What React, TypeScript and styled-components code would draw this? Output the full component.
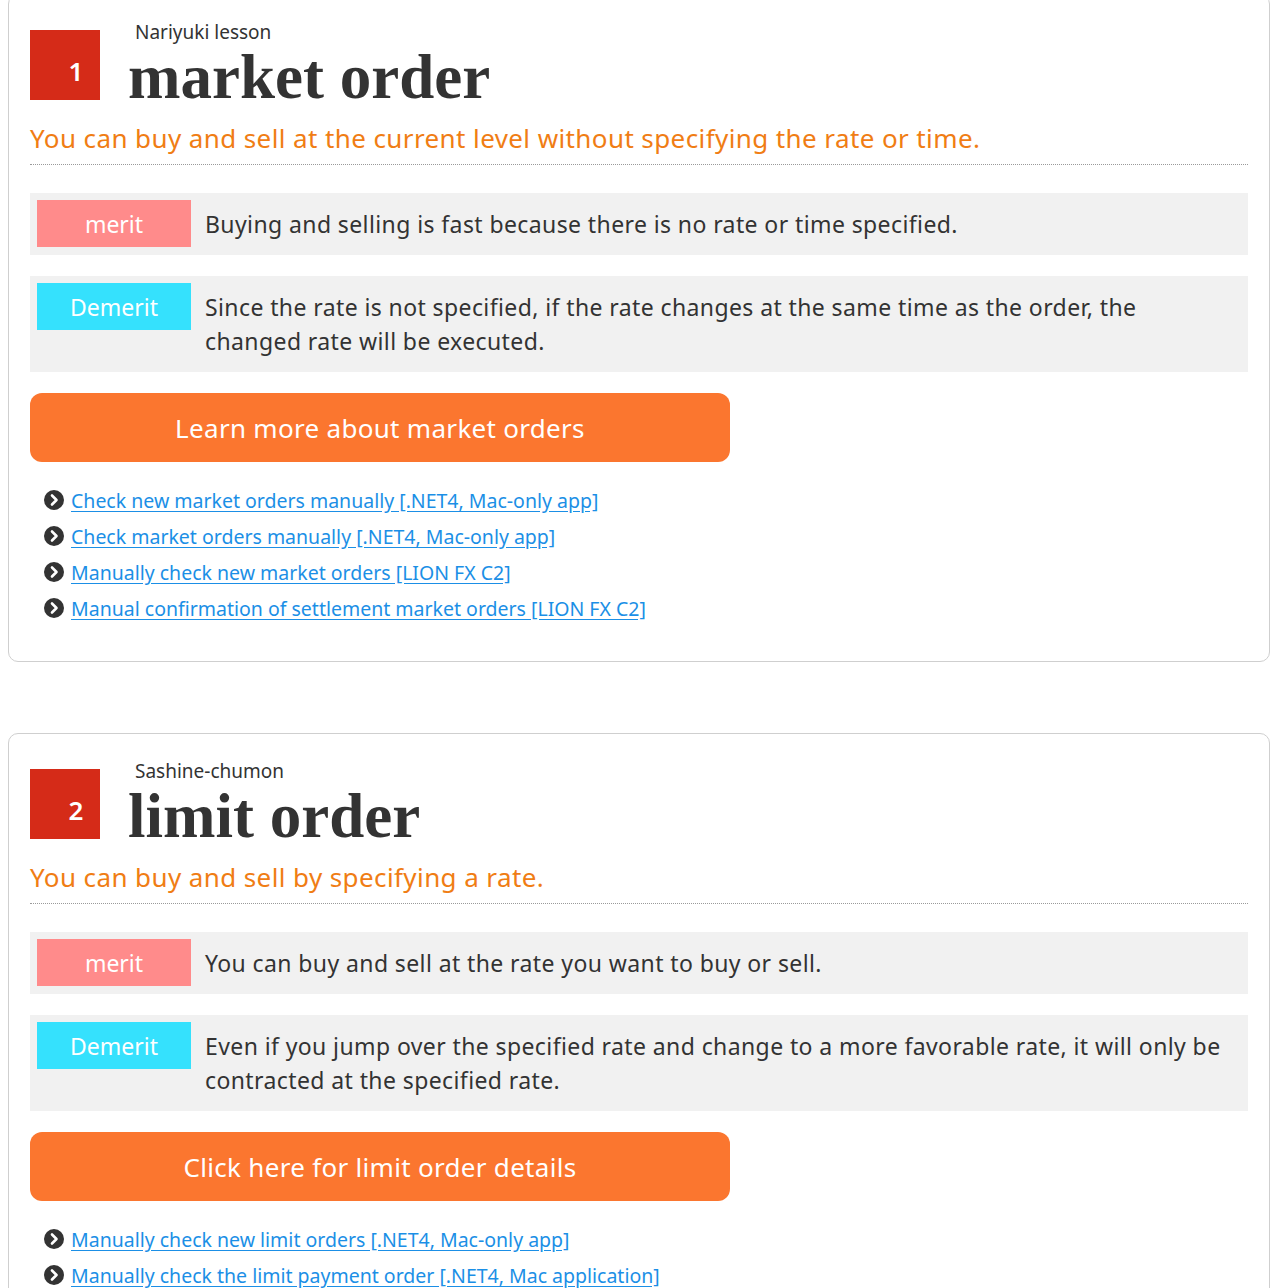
import React from 'react';
import styled, { createGlobalStyle } from 'styled-components';

const GlobalStyle = createGlobalStyle`
  html, body {
    margin: 0;
    padding: 0;
    background: #fff;
  }
  body {
    font-family: 'Noto Sans', 'Noto Sans CJK JP', sans-serif;
    color: #333;
  }
`;

const Page = styled.div`
  display: flex;
  flex-direction: column;
  gap: 71px;
  margin: -6px 1px 0 8px;
`;

const Card = styled.section`
  border: 1px solid #cfcfcf;
  border-radius: 10px;
  padding: 35px 21px 35px;
`;

const Heading = styled.div`
  display: flex;
  align-items: flex-start;
`;

const Badge = styled.div`
  display: flex;
  align-items: center;
  justify-content: center;
  width: 70px;
  height: 70px;
  padding: 12px 0 0 22px;
  box-sizing: border-box;
  background: #d52b18;
  color: #fff;
  font-size: 26px;
  font-weight: 600;
`;

const TitleBlock = styled.div`
  display: flex;
  flex-direction: column;
  margin-left: 28px;
  margin-top: -12px;
`;

const Subtitle = styled.div`
  padding-left: 7px;
  font-size: 19px;
  line-height: 28px;
`;

const Title = styled.h2`
  margin: 1px 0 0;
  font-family: 'Liberation Serif', 'DejaVu Serif', serif;
  font-size: 63px;
  font-weight: 700;
  line-height: 60px;
  color: #333;
`;

const Lead = styled.p`
  margin: 13px 0 0;
  padding-bottom: 8px;
  border-bottom: 1px dotted #9a9a9a;
  color: #f07d14;
  font-size: 26px;
  letter-spacing: 0.4px;
  line-height: 36px;
`;

const Points = styled.div`
  display: flex;
  flex-direction: column;
  gap: 21px;
  margin-top: 28px;
`;

const Point = styled.div`
  display: flex;
  align-items: flex-start;
  background: #f1f1f1;
  padding: 7px 20px 0 7px;
`;

const Tag = styled.span<{ $tone: 'merit' | 'demerit' }>`
  flex: 0 0 154px;
  height: 47px;
  display: flex;
  align-items: center;
  justify-content: center;
  background: ${(p) => (p.$tone === 'merit' ? '#ff8b8b' : '#35e1fd')};
  color: #fff;
  font-size: 23px;
`;

const PointText = styled.p`
  margin: 0;
  padding: 7px 0 14px 14px;
  font-size: 23px;
  letter-spacing: 0.4px;
  line-height: 34px;
  color: #333;
`;

const MoreButton = styled.a`
  display: flex;
  align-items: center;
  justify-content: center;
  width: 700px;
  height: 69px;
  margin-top: 21px;
  border-radius: 12px;
  background: #fb762f;
  color: #fff;
  font-size: 26px;
  letter-spacing: 0.3px;
  text-decoration: none;
`;

const LinkList = styled.ul`
  list-style: none;
  margin: 20px 0 0;
  padding: 0 0 0 14px;
  display: flex;
  flex-direction: column;
`;

const LinkItem = styled.li`
  display: flex;
  align-items: center;
  gap: 7px;
  height: 36px;
`;

const LinkText = styled.a`
  color: #1b8fe6;
  font-size: 19.5px;
  text-decoration: underline;
  text-underline-offset: 3px;
`;

const Chevron = () => (
  <svg width="20" height="20" viewBox="0 0 20 20" aria-hidden="true">
    <circle cx="10" cy="10" r="10" fill="#333" />
    <path d="M8 5.5 L12.5 10 L8 14.5" fill="none" stroke="#fff" strokeWidth="2.6" strokeLinecap="round" strokeLinejoin="round" />
  </svg>
);

type Lesson = {
  no: number;
  sub: string;
  title: string;
  lead: string;
  merit: string;
  demerit: string;
  button: string;
  links: string[];
};

const lessons: Lesson[] = [
  {
    no: 1,
    sub: 'Nariyuki lesson',
    title: 'market order',
    lead: 'You can buy and sell at the current level without specifying the rate or time.',
    merit: 'Buying and selling is fast because there is no rate or time specified.',
    demerit:
      'Since the rate is not specified, if the rate changes at the same time as the order, the changed rate will be executed.',
    button: 'Learn more about market orders',
    links: [
      'Check new market orders manually [.NET4, Mac-only app]',
      'Check market orders manually [.NET4, Mac-only app]',
      'Manually check new market orders [LION FX C2]',
      'Manual confirmation of settlement market orders [LION FX C2]',
    ],
  },
  {
    no: 2,
    sub: 'Sashine-chumon',
    title: 'limit order',
    lead: 'You can buy and sell by specifying a rate.',
    merit: 'You can buy and sell at the rate you want to buy or sell.',
    demerit:
      'Even if you jump over the specified rate and change to a more favorable rate, it will only be contracted at the specified rate.',
    button: 'Click here for limit order details',
    links: [
      'Manually check new limit orders [.NET4, Mac-only app]',
      'Manually check the limit payment order [.NET4, Mac application]',
      'Manually check limit orders [LION FX C2]',
      'Manual confirmation of settlement limit orders [LION FX C2]',
    ],
  },
];

const LessonCard = ({ lesson }: { lesson: Lesson }) => (
  <Card>
    <Heading>
      <Badge>{lesson.no}</Badge>
      <TitleBlock>
        <Subtitle>{lesson.sub}</Subtitle>
        <Title>{lesson.title}</Title>
      </TitleBlock>
    </Heading>
    <Lead>{lesson.lead}</Lead>
    <Points>
      <Point>
        <Tag $tone="merit">merit</Tag>
        <PointText>{lesson.merit}</PointText>
      </Point>
      <Point>
        <Tag $tone="demerit">Demerit</Tag>
        <PointText>{lesson.demerit}</PointText>
      </Point>
    </Points>
    <MoreButton href="#">{lesson.button}</MoreButton>
    <LinkList>
      {lesson.links.map((l) => (
        <LinkItem key={l}>
          <Chevron />
          <LinkText href="#">{l}</LinkText>
        </LinkItem>
      ))}
    </LinkList>
  </Card>
);

const App = () => (
  <>
    <GlobalStyle />
    <Page>
      {lessons.map((l) => (
        <LessonCard key={l.no} lesson={l} />
      ))}
    </Page>
  </>
);

export default App;
